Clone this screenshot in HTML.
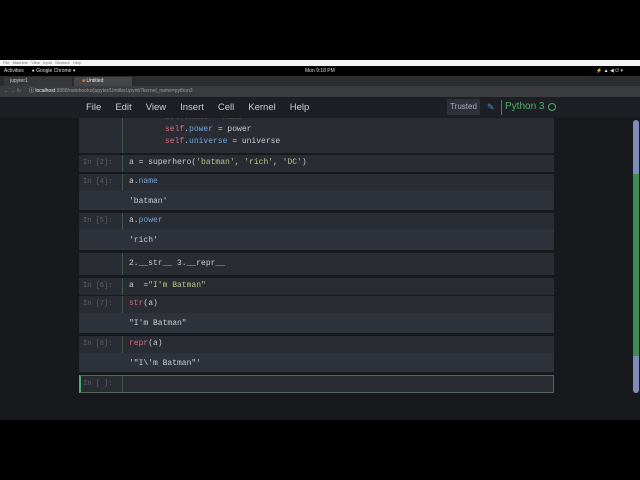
<!DOCTYPE html>
<html><head><meta charset="utf-8"><style>
*{margin:0;padding:0;box-sizing:border-box}
body{width:640px;height:480px;background:#000;position:relative;overflow:hidden;font-family:"Liberation Sans",sans-serif}
.a{position:absolute}
.mono{font-family:"Liberation Mono","DejaVu Sans Mono",monospace;font-size:8px;white-space:pre}
.cell{position:absolute;left:79px;width:475px;background:#2a2c33;overflow:hidden}
.in{position:absolute;left:79px;width:475px;height:17px;background:#2a2c33}
.out{position:absolute;left:79px;width:475px;background:#2e333b}
.p{position:absolute;left:4px;color:#5c616b;font-family:"Liberation Mono",monospace;font-size:7px}
.bar{position:absolute;left:43px;top:0;width:1px;height:100%;background:#3e5a48}
.c{position:absolute;left:50px;color:#c8ccd2}
.k{color:#6fa4d8}.s{color:#b5c48a}.r{color:#d46a7e}
</style></head><body>
<div class="a" style="left:0;top:60px;width:640px;height:6px;background:#f4f4f4;font-size:4px;color:#777;padding-left:3px;line-height:6px">File &nbsp; Machine &nbsp; View &nbsp; Input &nbsp; Devices &nbsp; Help</div>
<div class="a" style="left:0;top:66px;width:640px;height:10px;background:#000;color:#ddd;font-size:5px;line-height:10px"><span style="margin-left:4px">Activities</span><span style="margin-left:8px">● Google Chrome ▾</span><span class="a" style="left:305px">Mon 9:18 PM</span><span class="a" style="left:596px">⚡ ▲ ◀ ⏻ ▾</span></div>
<div class="a" style="left:0;top:76px;width:640px;height:10px;background:#2b2c2e"></div>
<div class="a" style="left:4px;top:77px;width:68px;height:9px;background:#363739;color:#ccc;font-size:5px;line-height:9px;padding-left:6px">jupyter1</div>
<div class="a" style="left:74px;top:77px;width:58px;height:9px;background:#454648;color:#eee;font-size:5px;line-height:9px;padding-left:8px"><span style="color:#e07a2a">■</span> Untitled</div>
<div class="a" style="left:0;top:86px;width:640px;height:11px;background:#3a3b3d;color:#999;font-size:5px;line-height:11px"><span style="margin-left:4px">← → ↻</span><span style="margin-left:8px;color:#eee">ⓘ localhost</span>:8888/notebooks/jupyter/Untitled.ipynb?kernel_name=python3</div>
<div class="a" style="left:0;top:97px;width:640px;height:21px;background:#1d1f24"></div>
<div class="a" style="left:86px;top:102px;color:#c9ccd1;font-size:9.5px;word-spacing:0">
<span>File</span><span style="margin-left:14px">Edit</span><span style="margin-left:14px">View</span><span style="margin-left:14px">Insert</span><span style="margin-left:14px">Cell</span><span style="margin-left:14px">Kernel</span><span style="margin-left:14px">Help</span></div>
<div class="a" style="left:447px;top:99px;width:33px;height:16px;background:#2c313a;color:#aab;font-size:8px;line-height:16px;text-align:center">Trusted</div>
<div class="a" style="left:487px;top:102px;color:#3f8fe0;font-size:9px">✎</div>
<div class="a" style="left:501px;top:100px;width:1px;height:15px;background:#3e8a55"></div>
<div class="a" style="left:505px;top:101px;color:#4caf6a;font-size:10px">Python 3</div>
<div class="a" style="left:548px;top:103px;width:8px;height:8px;border:1.5px solid #4caf6a;border-radius:50%"></div>
<div class="a" style="left:0;top:118px;width:640px;height:302px;background:#17191d"></div>
<div class="a" style="left:633px;top:120px;width:6px;height:273px;background:#7e8db5;border-radius:3px"></div>
<div class="a" style="left:633px;top:174px;width:6px;height:182px;background:#3f8a58"></div>

<div class="cell mono" style="top:118px;height:35px"><div class="bar"></div>
<div class="a" style="left:86px;top:-5px;color:#555">self.name = name</div>
<div class="a" style="left:86px;top:7px;color:#c8ccd2"><span class="r">self</span>.<span class="k">power</span> = power</div>
<div class="a" style="left:86px;top:19px;color:#c8ccd2"><span class="r">self</span>.<span class="k">universe</span> = universe</div></div>

<div class="in mono" style="top:155px"><div class="bar"></div><div class="p" style="top:4px">In [2]:</div><div class="c" style="top:3px">a = superhero(<span class="s">'batman'</span>, <span class="s">'rich'</span>, <span class="s">'DC'</span>)</div></div>

<div class="in mono" style="top:174px"><div class="bar"></div><div class="p" style="top:4px">In [4]:</div><div class="c" style="top:3px">a.<span class="k">name</span></div></div>
<div class="out mono" style="top:191px;height:19px"><div class="c" style="top:6px">'batman'</div></div>

<div class="in mono" style="top:213px"><div class="bar"></div><div class="p" style="top:4px">In [5]:</div><div class="c" style="top:3px">a.<span class="k">power</span></div></div>
<div class="out mono" style="top:230px;height:20px"><div class="c" style="top:6px">'rich'</div></div>

<div class="cell mono" style="top:253px;height:22px"><div class="bar"></div><div class="c" style="top:6px">2.__str__ 3.__repr__</div></div>

<div class="in mono" style="top:278px"><div class="bar"></div><div class="p" style="top:4px">In [6]:</div><div class="c" style="top:3px">a  =<span class="s">"I'm Batman"</span></div></div>

<div class="in mono" style="top:296px"><div class="bar"></div><div class="p" style="top:4px">In [7]:</div><div class="c" style="top:3px"><span class="r">str</span>(a)</div></div>
<div class="out mono" style="top:313px;height:20px"><div class="c" style="top:6px">"I'm Batman"</div></div>

<div class="in mono" style="top:336px"><div class="bar"></div><div class="p" style="top:4px">In [8]:</div><div class="c" style="top:3px"><span class="r">repr</span>(a)</div></div>
<div class="out mono" style="top:353px;height:19px"><div class="c" style="top:6px">'"I\'m Batman"'</div></div>

<div class="in mono" style="top:375px;height:18px;border:1px solid #56635a;border-left:2px solid #4caf6a"><div class="bar" style="left:41px"></div><div class="p" style="top:4px;left:2px">In [ ]:</div></div>
</body></html>
